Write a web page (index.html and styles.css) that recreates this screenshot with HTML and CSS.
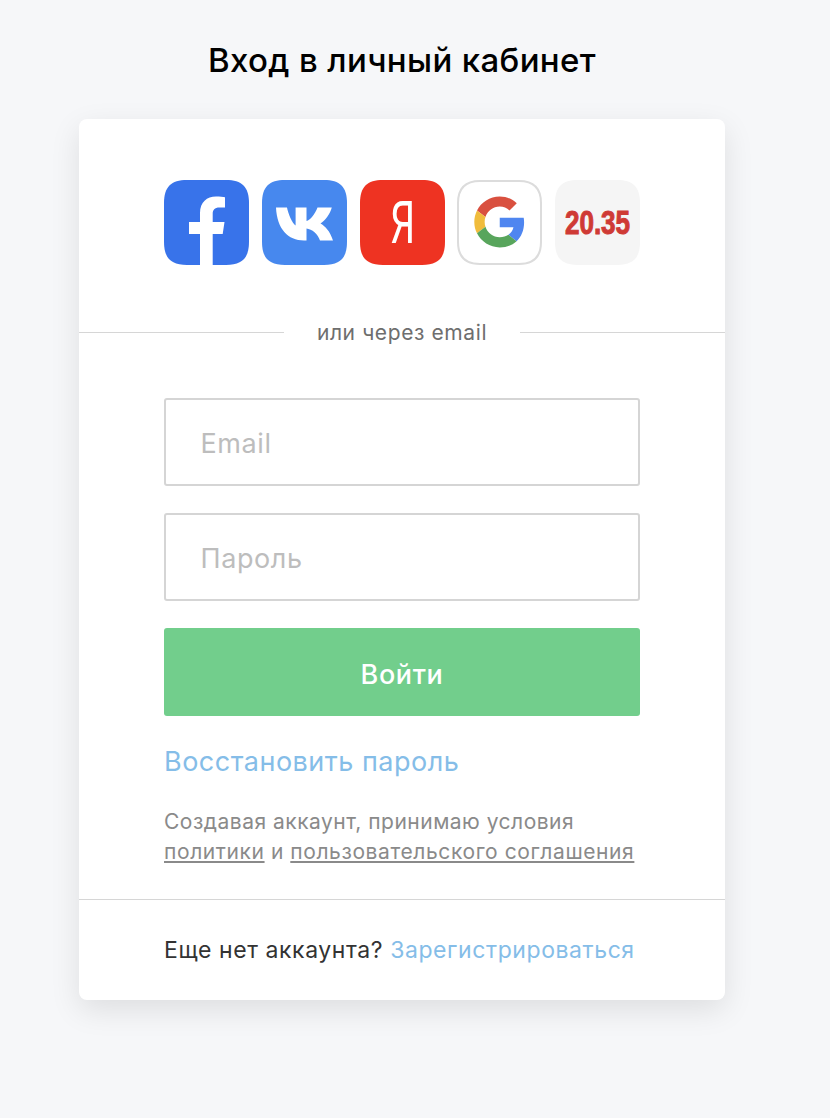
FILE: index.html
```html
<!DOCTYPE html>
<html lang="ru">
<head>
    <meta charset="UTF-8">
    <title>Вход в личный кабинет</title>
    <link rel="stylesheet" href="styles.css">
</head>
<body>
    <h1 class="page-title">Вход в личный кабинет</h1>
    <div class="login-card">
        <div class="social-list">
            <a class="social-icon" href="#">
                <svg viewBox="0 0 85 85" width="85" height="85">
                    <path fill="#3873ea" d="M23 0H62C78 0 85 7 85 23V62C85 78 78 85 62 85H23C7 85 0 78 0 62V23C0 7 7 0 23 0Z"/>
                    <path fill="#fff" d="M36 85V54H25V42H36V33C36 22 43 16.5 52 16.5C56 16.5 59 17 61 17.3V27.5H55.5C50.5 27.5 48.7 30 48.7 34V42H60.5L58.7 54H48.7V85Z"/>
                </svg>
            </a>
            <a class="social-icon" href="#">
                <svg viewBox="0 0 85 85" width="85" height="85">
                    <path fill="#4788ee" d="M23 0H62C78 0 85 7 85 23V62C85 78 78 85 62 85H23C7 85 0 78 0 62V23C0 7 7 0 23 0Z"/>
                    <path fill="#fff" d="M14 27.5H25C26 33 30 43 33.6 45.5V27.5H44.5V41C48 40.5 53 34 55.5 27.5H69.8C68 34 63 41 58.5 43.5C63 46 68 51 71 60.5H58C56 54 50 49 44.5 48.5V60.5H42C26 60.5 15 49 14 27.5Z"/>
                </svg>
            </a>
            <a class="social-icon" href="#">
                <svg viewBox="0 0 85 85" width="85" height="85">
                    <path fill="#ee3322" d="M23 0H62C78 0 85 7 85 23V62C85 78 78 85 62 85H23C7 85 0 78 0 62V23C0 7 7 0 23 0Z"/>
                    <text class="yandex-letter" transform="translate(42.5 63) scale(0.66 1)">Я</text>
                </svg>
            </a>
            <a class="social-icon" href="#">
                <svg viewBox="0 0 85 85" width="85" height="85">
                    <path fill="#fff" stroke="#dcdcdc" stroke-width="2" d="M23 1H62C77 1 84 8 84 23V62C84 77 77 84 62 84H23C8 84 1 77 1 62V23C1 8 8 1 23 1Z"/>
                    <g transform="translate(17.3 16.5) scale(1.06)">
                        <path fill="#d9503f" d="M24 9.5c3.54 0 6.71 1.22 9.21 3.6l6.85-6.85C35.9 2.38 30.47 0 24 0 14.62 0 6.51 5.38 2.56 13.22l7.98 6.19C12.43 13.72 17.74 9.5 24 9.5z"/>
                        <path fill="#4f86f0" d="M46.98 24.55c0-1.57-.15-3.09-.38-4.55H24v9.02h12.94c-.58 2.96-2.26 5.48-4.78 7.18l7.73 6c4.51-4.18 7.09-10.36 7.09-17.65z"/>
                        <path fill="#f0bc3c" d="M10.53 28.59c-.48-1.45-.76-2.99-.76-4.59s.27-3.14.76-4.59l-7.98-6.19C.92 16.46 0 20.12 0 24c0 3.88.92 7.54 2.56 10.78l7.97-6.19z"/>
                        <path fill="#58a55c" d="M24 48c6.48 0 11.93-2.13 15.89-5.81l-7.73-6c-2.15 1.45-4.92 2.3-8.16 2.3-6.26 0-11.57-4.22-13.47-9.91l-7.98 6.19C6.51 42.62 14.62 48 24 48z"/>
                    </g>
                </svg>
            </a>
            <a class="social-icon" href="#">
                <svg viewBox="0 0 85 85" width="85" height="85">
                    <path fill="#f5f5f5" d="M23 0H62C78 0 85 7 85 23V62C85 78 78 85 62 85H23C7 85 0 78 0 62V23C0 7 7 0 23 0Z"/>
                    <text class="leader-id" transform="translate(42.5 54) scale(0.79 1)">20.35</text>
                </svg>
            </a>
        </div>

        <div class="divider-label"><span>или через email</span></div>

        <form class="login-form">
            <input class="text-input" type="text" placeholder="Email">
            <input class="text-input" type="password" placeholder="Пароль">
            <button class="submit-button" type="button">Войти</button>
        </form>

        <a class="restore-link" href="#">Восстановить пароль</a>
        <p class="terms">
            Создавая аккаунт, принимаю условия<br>
            <a href="#">политики</a> и <a href="#">пользовательского соглашения</a>
        </p>

        <div class="card-footer">
            Еще нет аккаунта? <a href="#">Зарегистрироваться</a>
        </div>
    </div>
</body>
</html>
```

FILE: styles.css
```css
* {
    box-sizing: border-box;
}

body {
    font-family: Inter, "Noto Sans", sans-serif;
    background-color: #f6f7f9;
    margin: 0;
    padding-right: 26px;
    min-height: 1118px;
    display: flex;
    flex-direction: column;
    align-items: center;
}

.page-title {
    font-size: 33px;
    font-weight: 500;
    letter-spacing: 0.35px;
    line-height: 40px;
    color: #000;
    margin: 40px 0 39px;
}

.login-card {
    width: 646px;
    height: 881px;
    background-color: #fff;
    border-radius: 8px;
    box-shadow: 0 10px 30px rgba(0, 0, 0, 0.1);
    display: flex;
    flex-direction: column;
}

.social-list {
    display: flex;
    justify-content: space-between;
    margin: 61px 85px 0;
}

.social-icon,
.social-icon svg {
    display: block;
    width: 85px;
    height: 85px;
}

.yandex-letter {
    font-family: Roboto, sans-serif;
    font-weight: 400;
    font-size: 60px;
    fill: #fff;
    text-anchor: middle;
}

.leader-id {
    font-family: "Liberation Sans", sans-serif;
    font-weight: 700;
    font-size: 33px;
    fill: #cf3a35;
    stroke: #cf3a35;
    stroke-width: 1;
    text-anchor: middle;
}

.divider-label {
    display: flex;
    align-items: center;
    margin-top: 54px;
    height: 26px;
    font-size: 21px;
    letter-spacing: 0.6px;
    color: #6e6e6e;
}

.divider-label::before,
.divider-label::after {
    content: "";
    flex: 1;
    height: 1px;
    background-color: #d6d6d6;
}

.divider-label span {
    padding: 0 33px;
}

.login-form {
    display: flex;
    flex-direction: column;
    gap: 27px;
    margin: 53px 85px 0;
}

.text-input {
    height: 88px;
    border: 2px solid #d5d5d5;
    border-radius: 3px;
    padding: 2px 34.5px 0;
    font-family: inherit;
    font-size: 27px;
    letter-spacing: 0.6px;
    color: #333;
    background-color: #fff;
    outline: none;
}

.text-input::placeholder {
    color: #bdbdbd;
    opacity: 1;
}

.submit-button {
    height: 88px;
    border: 0;
    border-radius: 3px;
    padding: 5px 0 0;
    background-color: #72ce8c;
    color: #fff;
    font-family: inherit;
    font-size: 27px;
    font-weight: 500;
    letter-spacing: 0.6px;
}

.restore-link {
    margin: 29px 85px 0;
    font-size: 27px;
    letter-spacing: 0.5px;
    line-height: 34px;
    color: #85bde8;
    text-decoration: none;
}

.terms {
    margin: 28px 85px 0;
    font-size: 21px;
    letter-spacing: 0.5px;
    line-height: 30px;
    color: #8a8a8a;
    white-space: nowrap;
}

.terms a {
    color: #8a8a8a;
    letter-spacing: 0.6px;
}

.card-footer {
    margin-top: auto;
    height: 101px;
    border-top: 1px solid #d6d6d6;
    padding: 34px 85px 0;
    font-size: 23px;
    letter-spacing: 0.58px;
    line-height: 32px;
    color: #333;
    white-space: nowrap;
}

.card-footer a {
    color: #85bde8;
    text-decoration: none;
}
```
